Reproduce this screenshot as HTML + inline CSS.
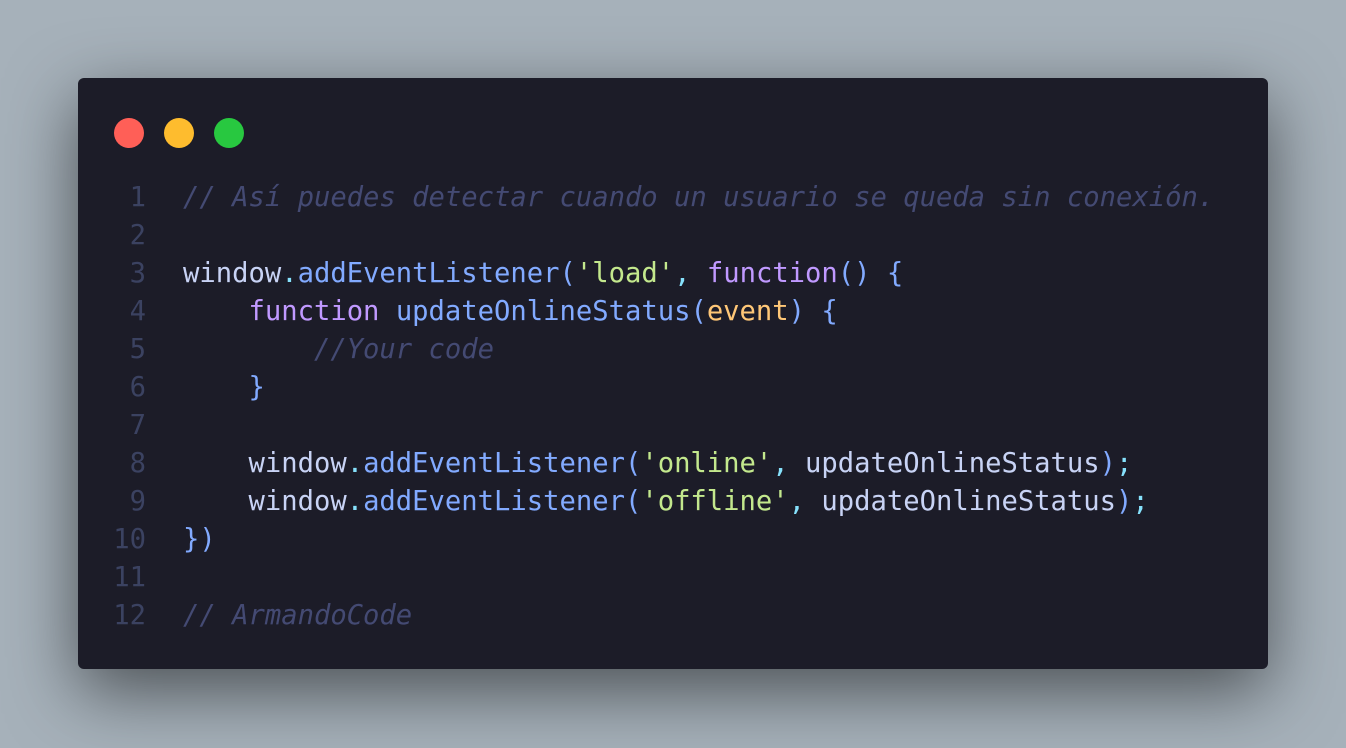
<!DOCTYPE html>
<html><head><meta charset="utf-8"><style>
html,body{margin:0;padding:0}
body{width:1346px;height:748px;background:#a6b1ba;overflow:hidden;position:relative}
.win{position:absolute;left:78px;top:78px;width:1190px;height:591px;background:#1c1c28;border-radius:6px;box-shadow:0 22px 70px rgba(0,0,0,0.55)}
.dot{position:absolute;top:40px;width:30px;height:30px;border-radius:50%}
pre{position:absolute;left:0;top:101px;margin:0;font-family:"DejaVu Sans Mono","Liberation Mono",monospace;font-size:27.2px;line-height:38px;color:#c8d3f5;white-space:pre}
.n{display:inline-block;width:68px;text-align:right;color:#3b4261;margin-right:37px}
.c{color:#444a73;font-style:italic}
.b{color:#82aaff}.p{color:#c099ff}.g{color:#c3e88d}.o{color:#ffc777}.cy{color:#86e1fc}
</style></head><body>
<div class="win">
<div class="dot" style="left:36px;background:#ff5f57"></div>
<div class="dot" style="left:86px;background:#febc2e"></div>
<div class="dot" style="left:136px;background:#28c840"></div>
<pre><span class="n">1</span><span class="c">// Así puedes detectar cuando un usuario se queda sin conexión.</span>
<span class="n">2</span>
<span class="n">3</span>window<span class="cy">.</span><span class="b">addEventListener</span><span class="b">(</span><span class="g">'load'</span><span class="cy">,</span> <span class="p">function</span><span class="b">() {</span>
<span class="n">4</span>    <span class="p">function</span> <span class="b">updateOnlineStatus(</span><span class="o">event</span><span class="b">) {</span>
<span class="n">5</span>        <span class="c">//Your code</span>
<span class="n">6</span>    <span class="b">}</span>
<span class="n">7</span>
<span class="n">8</span>    window<span class="cy">.</span><span class="b">addEventListener(</span><span class="g">'online'</span><span class="cy">,</span> updateOnlineStatus<span class="b">)</span><span class="cy">;</span>
<span class="n">9</span>    window<span class="cy">.</span><span class="b">addEventListener(</span><span class="g">'offline'</span><span class="cy">,</span> updateOnlineStatus<span class="b">)</span><span class="cy">;</span>
<span class="n">10</span><span class="b">})</span>
<span class="n">11</span>
<span class="n">12</span><span class="c">// ArmandoCode</span></pre>
</div>
</body></html>
